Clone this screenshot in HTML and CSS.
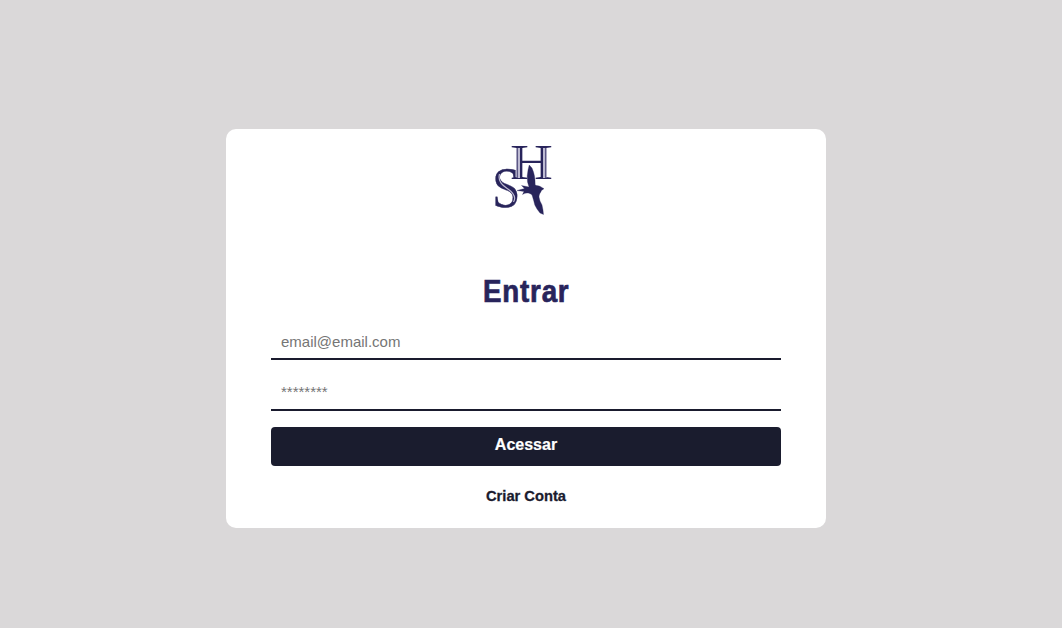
FILE: index.html
```html
<!DOCTYPE html>
<html lang="pt-BR">
<head>
<meta charset="utf-8">
<title>Entrar</title>
<link rel="stylesheet" href="styles.css">
</head>
<body>
<main class="card">
  <svg class="logo" viewBox="0 0 76 86" role="img" aria-label="HS">
    <text class="logo-letter" x="24" y="43.300" font-size="50" textLength="43" lengthAdjust="spacingAndGlyphs">H</text>
    <path class="logo-stem" d="M31 12V42M60 12V42"/>
    <path class="logo-inline" d="M33 12V42M58 12V42"/>
    <text class="logo-letter logo-s" x="6.200" y="71" font-size="57" textLength="28" lengthAdjust="spacingAndGlyphs">S</text>
    <path class="logo-inline logo-curve" d="M13.500 38C11.500 46 17 49.500 22 53C29 58 30 62 27.500 66"/>
    <path class="logo-bird" d="M43.200 29L46 32L47.500 36L48.500 40L49 44L49.200 49C51 50 53.500 49.500 55.500 51.200L58 52.700L55.500 54.500C54.500 57 53 58 53 61L54 65L56 69L57 74L57.500 78.500L54 77L51 73L48.800 69L47.500 64L46 59C43 56.500 40 56.500 36.500 58.500L38 55.500L31 54.500L38.500 52.500L35.500 49.500L43 51L41.500 46L41.200 40L42 34Z"/>
  </svg>
  <h1 class="title">Entrar</h1>
  <form class="form">
    <input class="field" type="email" placeholder="email@email.com">
    <input class="field field-password" type="password" placeholder="********">
    <button class="submit" type="button">Acessar</button>
  </form>
  <a class="signup">Criar Conta</a>
</main>
</body>
</html>
```
FILE: styles.css
```css
* { box-sizing: border-box; }
body {
  margin: 0;
  padding: 129px 10px 0 0;
  min-height: 628px;
  background: #dad8d9;
  font-family: "Liberation Sans", Arial, sans-serif;
}
.card {
  width: 600px;
  height: 399px;
  margin: 0 auto;
  padding: 7px 45px 0;
  background: #fff;
  border-radius: 10px;
  display: flex;
  flex-direction: column;
  align-items: center;
}
.logo { width: 76px; height: 86px; flex: none; margin-right: 4px; }
.logo-letter { font-family: "Liberation Serif", serif; fill: #28245b; }
.logo-s { stroke: #28245b; stroke-width: .4; }
.logo-stem { fill: none; stroke: #8f8bb0; stroke-width: 1; }
.logo-inline { fill: none; stroke: #bdbad2; stroke-width: 2; }
.logo-curve { stroke-width: 1.2; }
.logo-bird { fill: #28245b; stroke: #28245b; stroke-width: .3; }
.title {
  margin: 52px 0 0;
  font-size: 31px;
  line-height: 36px;
  letter-spacing: .9px;
  text-indent: .9px;
  color: #28245b;
  -webkit-text-stroke: .7px #28245b;
  transform: scaleX(.895);
}
.form { width: 100%; display: flex; flex-direction: column; margin-top: 16px; }
.field {
  height: 34px;
  margin: 0 0 17px;
  padding: 0 10px 2px;
  border: 0;
  border-bottom: 2px solid #1a1b2e;
  font: 15px "Liberation Sans", Arial, sans-serif;
  background: transparent;
  outline: 0;
}
.field-password { margin-bottom: 16px; padding-bottom: 4px; }
.field::placeholder { color: #757575; }
.submit {
  height: 39px;
  padding: 0 0 3px;
  border: 0;
  border-radius: 4px;
  background: #1a1c2e;
  color: #fff;
  font: bold 16px "Liberation Sans", Arial, sans-serif;
  -webkit-text-stroke: .2px #fff;
}
.signup {
  margin-top: 21px;
  font-size: 14.7px;
  font-weight: bold;
  line-height: 18px;
  color: #1a1b2e;
  -webkit-text-stroke: .3px #1a1b2e;
}
```
